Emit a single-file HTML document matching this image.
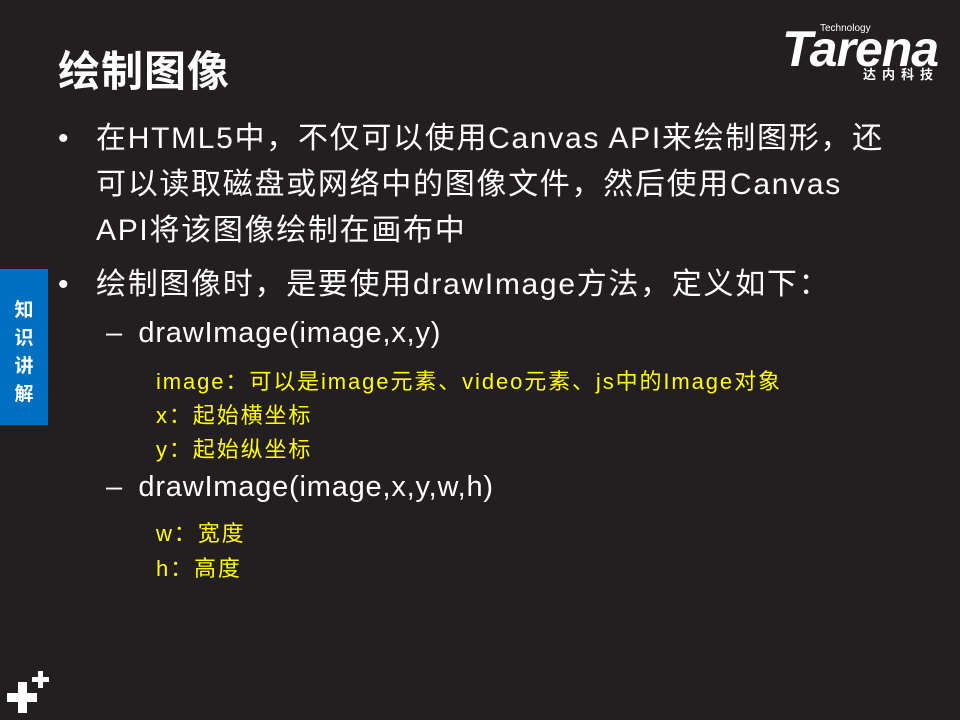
<!DOCTYPE html>
<html><head><meta charset="utf-8"><style>
body{margin:0;width:960px;height:720px;background:#231f20;position:relative;overflow:hidden;font-family:"Liberation Sans","Noto Sans CJK SC",sans-serif;color:#fff}
.a{position:absolute;white-space:nowrap}
.t{left:58px;top:38px;font-size:42px;font-weight:bold;letter-spacing:1px}
.b{font-size:30px;line-height:46px;letter-spacing:1.7px}
.y{color:#ffff00;font-size:22px;left:156px;letter-spacing:1.9px}
.s{font-size:29px;left:106px;letter-spacing:0.8px}
.tab{position:absolute;left:0;top:269px;width:48px;height:156px;background:#0070c0;color:#fff;font-weight:bold;font-size:19px;line-height:28px;text-align:center;padding-top:28px;box-sizing:border-box}
.p{position:absolute;background:#fff}
</style></head><body>
<div class="a t">绘制图像</div>
<div class="a" style="left:780px;top:12px;width:170px;height:70px">
<div style="font-size:10px;position:absolute;left:40px;top:11px">Technology</div>
<div style="position:absolute;left:2px;top:8px;font-size:50px;font-weight:bold;font-style:italic;letter-spacing:-1px">Tarena</div>
<div style="position:absolute;left:83px;top:52px;font-size:13px;font-weight:bold;letter-spacing:6px">达内科技</div>
</div>
<div class="a b" style="left:58px;top:116px">•</div>
<div class="a b" style="left:96px;top:116px">在HTML5中，不仅可以使用Canvas API来绘制图形，还<br>可以读取磁盘或网络中的图像文件，然后使用Canvas<br>API将该图像绘制在画布中</div>
<div class="a b" style="left:58px;top:262px">•</div>
<div class="a b" style="left:96px;top:262px">绘制图像时，是要使用drawImage方法，定义如下：</div>
<div class="a s" style="top:317px">–&thinsp; drawImage(image,x,y)</div>
<div class="a y" style="top:364px">image：可以是image元素、video元素、js中的Image对象</div>
<div class="a y" style="top:398px">x：起始横坐标</div>
<div class="a y" style="top:432px">y：起始纵坐标</div>
<div class="a s" style="top:471px">–&thinsp; drawImage(image,x,y,w,h)</div>
<div class="a y" style="top:516px">w：宽度</div>
<div class="a y" style="top:551px">h：高度</div>
<div class="tab">知<br>识<br>讲<br>解</div>
<div class="p" style="left:7px;top:693px;width:30px;height:9px"></div>
<div class="p" style="left:18px;top:682px;width:9px;height:31px"></div>
<div class="p" style="left:32px;top:677px;width:17px;height:5px"></div>
<div class="p" style="left:38px;top:671px;width:5px;height:17px"></div>
</body></html>
